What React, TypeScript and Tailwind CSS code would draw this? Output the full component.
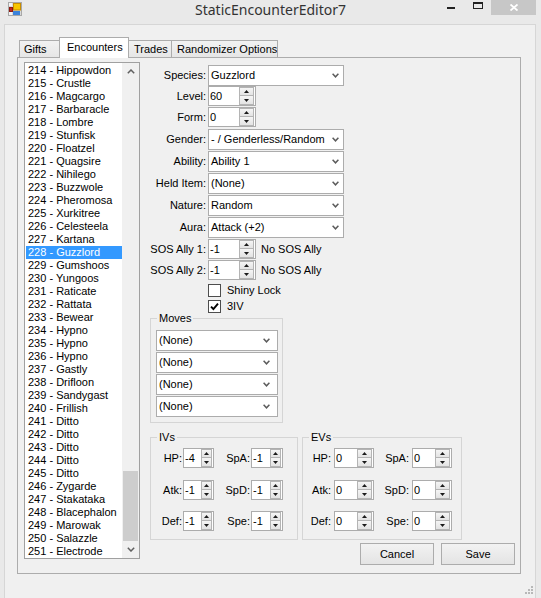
import React from "react";

const NAMES: string[] = [
  "214 - Hippowdon", "215 - Crustle", "216 - Magcargo", "217 - Barbaracle", "218 - Lombre",
  "219 - Stunfisk", "220 - Floatzel", "221 - Quagsire", "222 - Nihilego", "223 - Buzzwole",
  "224 - Pheromosa", "225 - Xurkitree", "226 - Celesteela", "227 - Kartana", "228 - Guzzlord",
  "229 - Gumshoos", "230 - Yungoos", "231 - Raticate", "232 - Rattata", "233 - Bewear",
  "234 - Hypno", "235 - Hypno", "236 - Hypno", "237 - Gastly", "238 - Drifloon",
  "239 - Sandygast", "240 - Frillish", "241 - Ditto", "242 - Ditto", "243 - Ditto",
  "244 - Ditto", "245 - Ditto", "246 - Zygarde", "247 - Stakataka", "248 - Blacephalon",
  "249 - Marowak", "250 - Salazzle", "251 - Electrode",
];

function UpTri() {
  return (
    <svg width="5" height="3" viewBox="0 0 5 3">
      <path d="M0 3L2.5 0L5 3Z" fill="#1a1a1a" />
    </svg>
  );
}
function DownTri() {
  return (
    <svg width="5" height="3" viewBox="0 0 5 3">
      <path d="M0 0L2.5 3L5 0Z" fill="#1a1a1a" />
    </svg>
  );
}

function Spin({ w }: { w: string }) {
  return (
    <div className={`flex flex-col ${w} mr-[1px] shrink-0`}>
      <div className="h-[9px] flex items-center justify-center border border-[#b4b4b4] bg-linear-to-b from-[#f5f5f5] to-[#e3e3e3]">
        <UpTri />
      </div>
      <div className="h-[9px] flex items-center justify-center border border-t-0 border-[#b4b4b4] bg-linear-to-b from-[#f5f5f5] to-[#e3e3e3]">
        <DownTri />
      </div>
    </div>
  );
}

function Num({ value, w, spin }: { value: string; w: string; spin: string }) {
  return (
    <div className={`flex h-[20px] ${w} border border-[#acacac] bg-white shrink-0`}>
      <span className="flex-1 pl-[1px] leading-[18px] whitespace-nowrap overflow-hidden">{value}</span>
      <Spin w={spin} />
    </div>
  );
}

function ComboArrow() {
  return (
    <svg width="7" height="5" viewBox="0 0 7 5" className="shrink-0">
      <path d="M0.6 0.8L3.5 3.8L6.4 0.8" fill="none" stroke="#5c5c5c" strokeWidth="1.5" />
    </svg>
  );
}

function Combo({ text, w, arrowMr }: { text: string; w: string; arrowMr: string }) {
  return (
    <div className={`flex items-center h-[21px] ${w} border border-[#acacac] bg-white shrink-0`}>
      <span className="flex-1 pl-[2px] whitespace-nowrap overflow-hidden">{text}</span>
      <span className={`${arrowMr} flex`}>
        <ComboArrow />
      </span>
    </div>
  );
}

function Check({ checked }: { checked?: boolean }) {
  return (
    <div className="w-[13px] h-[13px] border border-[#4d4d4d] bg-white flex items-center justify-center shrink-0">
      {checked && (
        <svg width="9" height="9" viewBox="0 0 9 9">
          <path d="M1 4.6L3.4 7L8 1.6" stroke="#000" strokeWidth="1.9" fill="none" />
        </svg>
      )}
    </div>
  );
}

function Row({ label, children, className }: { label: string; children: React.ReactNode; className: string }) {
  return (
    <div className={`flex items-center ${className}`}>
      <div className="w-[56px] flex justify-end whitespace-nowrap">{label}</div>
      <div className="ml-[2px] flex items-center">{children}</div>
    </div>
  );
}

function Chevron({ up }: { up?: boolean }) {
  return (
    <svg width="8" height="5" viewBox="0 0 8 5">
      <path
        d={up ? "M0.8 4.2L4 1L7.2 4.2" : "M0.8 0.8L4 4L7.2 0.8"}
        fill="none"
        stroke="#606060"
        strokeWidth="1.5"
      />
    </svg>
  );
}

function StatRow({
  a,
  av,
  b,
  bv,
  ev,
  className,
}: {
  a: string;
  av: string;
  b: string;
  bv: string;
  ev?: boolean;
  className: string;
}) {
  if (ev) {
    return (
      <div className={`flex items-center ${className}`}>
        <div className="w-[28px] flex justify-end">{a}</div>
        <div className="ml-[3px]">
          <Num value={av} w="w-[40px]" spin="w-[15px]" />
        </div>
        <div className="w-[35px] flex justify-end">{b}</div>
        <div className="ml-[3px]">
          <Num value={bv} w="w-[40px]" spin="w-[15px]" />
        </div>
      </div>
    );
  }
  return (
    <div className={`flex items-center ${className}`}>
      <div className="w-[31px] flex justify-end">{a}</div>
      <div className="ml-[1px]">
        <Num value={av} w="w-[31px]" spin="w-[11px]" />
      </div>
      <div className="w-[36px] flex justify-end">{b}</div>
      <div className="ml-[1px]">
        <Num value={bv} w="w-[32px]" spin="w-[11px]" />
      </div>
    </div>
  );
}

export default function App() {
  return (
    <div className="relative w-[541px] h-[598px] overflow-hidden bg-[#e9e9e9] font-['Liberation_Sans',Arial,sans-serif] text-[11px] leading-[13px] text-black flex flex-col">
      {/* Title bar */}
      <div className="h-[24px] flex items-start shrink-0">
        <div className="w-[94px] flex">
          <svg width="14" height="14" viewBox="0 0 14 14" className="ml-[8px] mt-[2px]">
            <rect x="0.5" y="0.5" width="13" height="13" fill="#d9d9d9" stroke="#a8a8a8" />
            <rect x="1" y="1" width="3" height="3" fill="#f4f4f4" />
            <rect x="1" y="10" width="3" height="3" fill="#f4f4f4" />
            <rect x="1" y="5" width="4" height="5" fill="#c62a1f" />
            <rect x="1.5" y="5.5" width="3" height="4" fill="none" stroke="#8e1a12" strokeWidth="1" />
            <rect x="5.5" y="1.5" width="7" height="6.5" fill="#f7c600" stroke="#c98d00" />
            <rect x="5" y="9" width="7" height="4" fill="#3b82db" />
          </svg>
        </div>
        <div className="flex-1 text-center font-['Noto_Sans',sans-serif] text-[14px] leading-[19px] text-[#333] whitespace-nowrap">
          StaticEncounterEditor7
        </div>
        <div className="w-[94px] flex items-start">
          <div className="w-[8px] h-[2px] mt-[7px] bg-[#222]" />
          <div className="ml-[18px] mt-[2px] w-[10px] h-[7px] border border-[#222] border-t-2" />
          <div className="ml-[8px] w-[45px] h-[15px] bg-[#c7c7c7] flex items-center justify-center">
            <svg width="8" height="7" viewBox="0 0 8 7">
              <path d="M0.5 0.5L7.5 6.5M7.5 0.5L0.5 6.5" stroke="#fff" strokeWidth="1.8" />
            </svg>
          </div>
        </div>
      </div>

      {/* Client area */}
      <div className="flex-1 ml-[4px] w-[532px] border-t border-l border-r border-[#d6d6d6] bg-[#f0f0f0] pt-[12px] pl-[12px]">
        {/* Tabs */}
        <div className="flex items-end ml-[2px] h-[20px] relative z-10 whitespace-nowrap">
          <div className="w-[41px] h-[17px] border border-b-0 border-[#acacac] bg-linear-to-b from-[#f2f2f2] to-[#e6e6e6] pl-[4px] pt-[2px]">
            Gifts
          </div>
          <div className="-ml-px w-[70px] h-[21px] -mb-px border border-b-0 border-[#acacac] bg-white pl-[7px] pt-[3px] relative z-20">
            Encounters
          </div>
          <div className="-ml-px w-[44px] h-[17px] border border-b-0 border-[#acacac] bg-linear-to-b from-[#f2f2f2] to-[#e6e6e6] pl-[5px] pt-[2px]">
            Trades
          </div>
          <div className="-ml-px w-[107px] h-[17px] border border-b-0 border-[#acacac] bg-linear-to-b from-[#f2f2f2] to-[#e6e6e6] pl-[5px] pt-[2px] overflow-hidden">
            Randomizer Options
          </div>
        </div>

        {/* Tab panel */}
        <div className="w-[504px] h-[517px] border border-[#acacac] bg-[#f0f0f0] flex">
          {/* List box */}
          <div className="ml-[6px] mt-[4px] w-[116px] h-[497px] border border-[#a0a0a0] bg-white flex overflow-hidden shrink-0">
            <div className="flex-1 pt-[1px] overflow-hidden">
              {NAMES.map((n) => (
                <div
                  key={n}
                  className={`h-[13px] ml-[1px] pl-[2px] whitespace-nowrap ${
                    n === "228 - Guzzlord" ? "bg-[#3399ff] text-white" : ""
                  }`}
                >
                  {n}
                </div>
              ))}
            </div>
            <div className="w-[17px] bg-[#f0f0f0] flex flex-col shrink-0">
              <div className="h-[17px] flex items-center justify-center">
                <Chevron up />
              </div>
              <div className="flex-1 flex flex-col justify-end">
                <div className="h-[70px] mx-[1px] bg-[#cdcdcd]" />
              </div>
              <div className="h-[17px] flex items-center justify-center">
                <Chevron />
              </div>
            </div>
          </div>

          {/* Right side */}
          <div className="ml-[10px] pt-[7px] flex flex-col flex-1">
            <Row label="Species:" className="h-[21px]">
              <Combo text="Guzzlord" w="w-[136px]" arrowMr="mr-[4px]" />
            </Row>
            <Row label="Level:" className="h-[20px]">
              <Num value="60" w="w-[48px]" spin="w-[15px]" />
            </Row>
            <Row label="Form:" className="h-[20px] mt-[1px]">
              <Num value="0" w="w-[48px]" spin="w-[15px]" />
            </Row>
            <Row label="Gender:" className="h-[21px] mt-[2px]">
              <Combo text="- / Genderless/Random" w="w-[136px]" arrowMr="mr-[4px]" />
            </Row>
            <Row label="Ability:" className="h-[21px] mt-[1px]">
              <Combo text="Ability 1" w="w-[136px]" arrowMr="mr-[4px]" />
            </Row>
            <Row label="Held Item:" className="h-[21px] mt-[1px]">
              <Combo text="(None)" w="w-[136px]" arrowMr="mr-[4px]" />
            </Row>
            <Row label="Nature:" className="h-[21px] mt-[1px]">
              <Combo text="Random" w="w-[136px]" arrowMr="mr-[4px]" />
            </Row>
            <Row label="Aura:" className="h-[21px] mt-[1px]">
              <Combo text="Attack (+2)" w="w-[136px]" arrowMr="mr-[4px]" />
            </Row>
            <Row label="SOS Ally 1:" className="h-[20px] mt-[1px]">
              <Num value="-1" w="w-[48px]" spin="w-[15px]" />
              <span className="ml-[5px] whitespace-nowrap">No SOS Ally</span>
            </Row>
            <Row label="SOS Ally 2:" className="h-[20px] mt-[1px]">
              <Num value="-1" w="w-[48px]" spin="w-[15px]" />
              <span className="ml-[5px] whitespace-nowrap">No SOS Ally</span>
            </Row>
            <div className="flex items-center h-[13px] mt-[4px] ml-[58px]">
              <Check />
              <span className="ml-[6px]">Shiny Lock</span>
            </div>
            <div className="flex items-center h-[13px] mt-[3px] ml-[58px]">
              <Check checked />
              <span className="ml-[6px]">3IV</span>
            </div>

            {/* Moves */}
            <fieldset className="-mt-px w-[133px] border border-[#d5d5d5] pb-[5px]">
              <legend className="ml-[6px] px-[2px] leading-[12px]">Moves</legend>
              <div className="flex flex-col gap-[1px] ml-[5px] mt-[6px]">
                <Combo text="(None)" w="w-[122px]" arrowMr="mr-[7px]" />
                <Combo text="(None)" w="w-[122px]" arrowMr="mr-[7px]" />
                <Combo text="(None)" w="w-[122px]" arrowMr="mr-[7px]" />
                <Combo text="(None)" w="w-[122px]" arrowMr="mr-[7px]" />
              </div>
            </fieldset>

            {/* IVs / EVs */}
            <div className="flex gap-[4px] mt-[8px]">
              <fieldset className="w-[148px] border border-[#d5d5d5] pb-[8px]">
                <legend className="ml-[6px] px-[2px] leading-[12px]">IVs</legend>
                <StatRow a="HP:" av="-4" b="SpA:" bv="-1" className="mt-[5px]" />
                <StatRow a="Atk:" av="-1" b="SpD:" bv="-1" className="mt-[12px]" />
                <StatRow a="Def:" av="-1" b="Spe:" bv="-1" className="mt-[11px]" />
              </fieldset>
              <fieldset className="w-[160px] border border-[#d5d5d5] pb-[8px]">
                <legend className="ml-[6px] px-[2px] leading-[12px]">EVs</legend>
                <StatRow ev a="HP:" av="0" b="SpA:" bv="0" className="mt-[5px]" />
                <StatRow ev a="Atk:" av="0" b="SpD:" bv="0" className="mt-[12px]" />
                <StatRow ev a="Def:" av="0" b="Spe:" bv="0" className="mt-[11px]" />
              </fieldset>
            </div>

            {/* Buttons */}
            <div className="flex justify-end gap-[7px] mt-[3px] mr-[5px]">
              <div className="w-[74px] h-[22px] border border-[#acacac] bg-linear-to-b from-[#f2f2f2] to-[#e4e4e4] flex items-center justify-center">
                Cancel
              </div>
              <div className="w-[74px] h-[22px] border border-[#acacac] bg-linear-to-b from-[#f2f2f2] to-[#e4e4e4] flex items-center justify-center">
                Save
              </div>
            </div>
          </div>
        </div>
      </div>

      {/* Resize grip */}
      <svg width="9" height="9" viewBox="0 0 9 9" className="absolute left-[525px] top-[586px]">
        <rect x="6" y="0" width="2" height="2" fill="#b8b8b8" />
        <rect x="3" y="3" width="2" height="2" fill="#b8b8b8" />
        <rect x="6" y="3" width="2" height="2" fill="#b8b8b8" />
        <rect x="0" y="6" width="2" height="2" fill="#b8b8b8" />
        <rect x="3" y="6" width="2" height="2" fill="#b8b8b8" />
        <rect x="6" y="6" width="2" height="2" fill="#b8b8b8" />
      </svg>
    </div>
  );
}
